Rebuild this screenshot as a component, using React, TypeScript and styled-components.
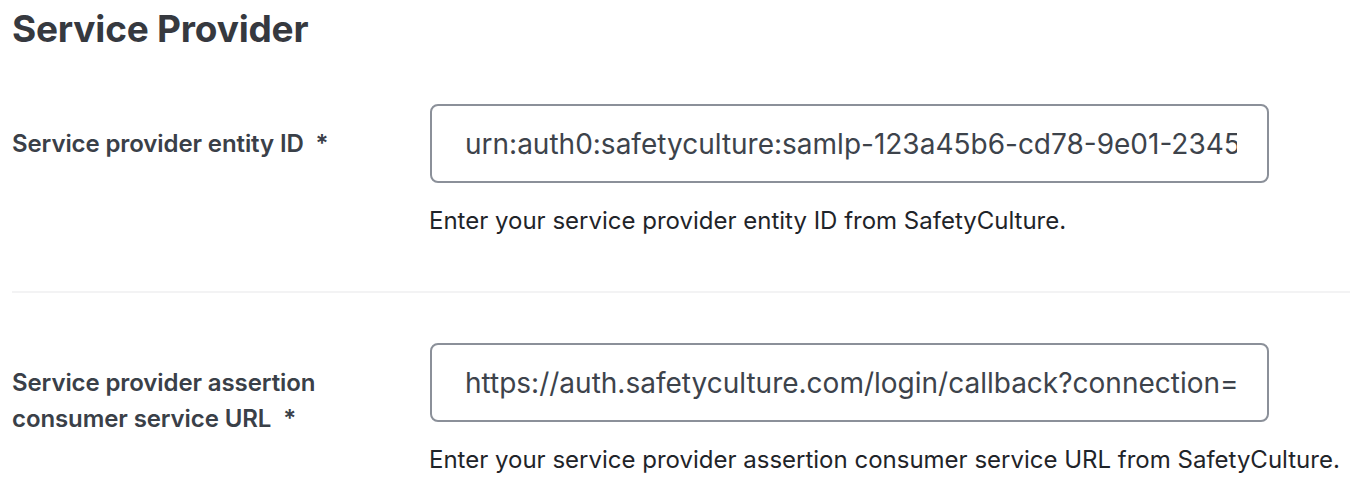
import React from "react";
import styled, { createGlobalStyle } from "styled-components";

const Global = createGlobalStyle`
  html, body { margin: 0; padding: 0; background: #ffffff; }
  body { font-family: Inter, "Noto Sans", sans-serif; -webkit-font-smoothing: antialiased; }
  * { box-sizing: border-box; }
`;

const Page = styled.div`
  padding: 7px 0 0 12px;
  width: 1350px;
`;

const Title = styled.h1`
  margin: 0;
  font-family: Inter, sans-serif;
  font-weight: 700;
  font-size: 37px;
  line-height: 44px;
  letter-spacing: -0.2px;
  color: #36393f;
`;

const Row = styled.div<{ $top: number }>`
  display: grid;
  grid-template-columns: 418px 839px;
  padding-top: ${(p) => p.$top}px;
`;

const Label = styled.label`
  display: block;
  padding-top: 22px;
  max-width: 370px;
  font-size: 24px;
  font-weight: 600;
  line-height: 36px;
  letter-spacing: -0.1px;
  color: #3a4048;
`;

const Field = styled.div`
  display: flex;
  flex-direction: column;
`;

const Input = styled.input`
  width: 839px;
  height: 79px;
  padding: 0 30px 0 33px;
  border: 2px solid #8b9099;
  border-radius: 8px;
  font-family: Inter, sans-serif;
  font-size: 28px;
  color: #3d434b;
  background: #fff;
  outline: none;
`;

const Help = styled.p`
  margin: 22px 0 0 -1px;
  font-size: 24px;
  line-height: 32px;
  white-space: nowrap;
  color: #1f2429;
`;

const Divider = styled.hr`
  margin: 54px 0 0 0;
  border: none;
  height: 2px;
  background: #f3f3f4;
`;

const rows = [
  {
    label: "Service provider entity ID",
    value: "urn:auth0:safetyculture:samlp-123a45b6-cd78-9e01-2345",
    help: "Enter your service provider entity ID from SafetyCulture.",
    top: 53,
  },
  {
    label: "Service provider assertion consumer service URL",
    value: "https://auth.safetyculture.com/login/callback?connection=",
    help: "Enter your service provider assertion consumer service URL from SafetyCulture.",
    top: 50,
  },
];

export default function App() {
  return (
    <>
      <Global />
      <Page>
        <Title>Service Provider</Title>
        {rows.map((r, i) => (
          <React.Fragment key={r.label}>
            {i > 0 && <Divider />}
            <Row $top={r.top}>
              <Label>{`${r.label}\u2002*`}</Label>
              <Field>
                <Input readOnly value={r.value} />
                <Help>{r.help}</Help>
              </Field>
            </Row>
          </React.Fragment>
        ))}
      </Page>
    </>
  );
}
